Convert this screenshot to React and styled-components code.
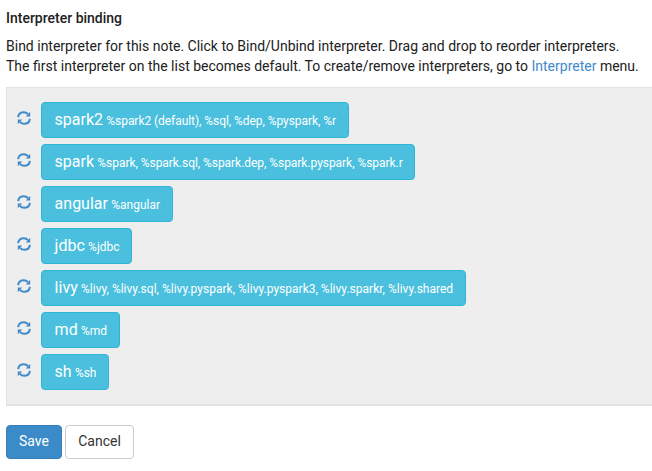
import React from "react";
import styled, { createGlobalStyle } from "styled-components";

const GlobalStyle = createGlobalStyle`
  * { box-sizing: border-box; }
  body { margin: 0; background: #fff; color: #212121; font: 14px/20px Roboto, sans-serif; overflow: hidden; }
`;
const Page = styled.main`
  padding: 8px 0 0 6px;
  height: 471px;
  overflow: hidden;
`;
const Title = styled.h5`
  margin: 0 0 8px;
  font-size: 14px;
  font-weight: 500;
  line-height: 20px;
`;
const Intro = styled.p`
  margin: 0;
  white-space: nowrap;
`;
const Link = styled.a`
  color: #428bca;
  text-decoration: none;
`;
const List = styled.div`
  display: flex;
  flex-direction: column;
  gap: 6px;
  height: 319px;
  margin-top: 11px;
  padding: 14px 0 0 10px;
  background: #eee;
  border: 1px solid #e2e2e2;
  border-right: 0;
  border-bottom: 2px solid #e2e2e2;
`;
const Row = styled.div`
  display: flex;
  align-items: flex-start;
  height: 36px;
`;
const RefreshSlot = styled.span`
  width: 24px;
  padding-top: 9px;
  color: #428bca;
  line-height: 0;
`;
const Tag = styled.button`
  width: ${(p) => p.$width}px;
  height: 36px;
  padding: 0 0 0 12.6px;
  border: 1px solid #2fb6d6;
  border-radius: 4px;
  background: #4abfde;
  color: #fff;
  font: 16px/34px Roboto, sans-serif;
  text-align: left;
  white-space: nowrap;
`;
const Names = styled.small`
  margin-left: -0.7px;
  font-size: 12px;
  letter-spacing: ${(p) => p.$spacing}px;
`;
const Actions = styled.div`
  display: flex;
  gap: 3px;
  margin-top: 19px;
`;
const Button = styled.button`
  width: ${(p) => (p.$primary ? 56 : 69)}px;
  height: 34px;
  padding: 0 0 2px;
  border: 1px solid ${(p) => (p.$primary ? "#357ebd" : "#ccc")};
  border-radius: 4px;
  background: ${(p) => (p.$primary ? "#3b8bc8" : "#fff")};
  color: ${(p) => (p.$primary ? "#fff" : "#333")};
  font: 14px/20px Roboto, sans-serif;
`;
const interpreters = [
  { name: "spark2", aliases: "%spark2 (default), %sql, %dep, %pyspark, %r", width: 308, spacing: -0.055 },
  { name: "spark", aliases: "%spark, %spark.sql, %spark.dep, %spark.pyspark, %spark.r", width: 374, spacing: -0.045 },
  { name: "angular", aliases: "%angular", width: 132, spacing: 0 },
  { name: "jdbc", aliases: "%jdbc", width: 91, spacing: 0 },
  { name: "livy", aliases: "%livy, %livy.sql, %livy.pyspark, %livy.pyspark3, %livy.sparkr, %livy.shared", width: 425, spacing: 0.01 },
  { name: "md", aliases: "%md", width: 79, spacing: 0 },
  { name: "sh", aliases: "%sh", width: 68, spacing: -0.1 },
];

function RefreshIcon() {
  return (
    <svg width="14" height="14" viewBox="0 0 14 14" aria-hidden="true">
      <path d="M1.1 6.2C1.5 3.1 3.9 1.2 6.8 1.2c1.8 0 3.2.7 4.2 1.9M12.9 7.8c-.4 3.1-2.8 5-5.7 5-1.8 0-3.2-.7-4.2-1.9" fill="none" stroke="currentColor" strokeWidth="2" />
      <path d="M13.2.8v4.6H8.8zM.8 13.2V8.6h4.4z" fill="currentColor" />
    </svg>
  );
}

export default function App() {
  return (
    <Page>
      <GlobalStyle />
      <Title>Interpreter binding</Title>
      <Intro>
        Bind interpreter for this note. Click to Bind/Unbind interpreter. Drag and drop to reorder interpreters.<br />
        The first interpreter on the list becomes default. To create/remove interpreters, go to <Link>Interpreter</Link> menu.
      </Intro>
      <List>
        {interpreters.map(({ name, aliases, width, spacing }) => (
          <Row key={name}>
            <RefreshSlot><RefreshIcon /></RefreshSlot>
            <Tag $width={width}>{name} <Names $spacing={spacing}>{aliases}</Names></Tag>
          </Row>
        ))}
      </List>
      <Actions>
        <Button $primary>Save</Button>
        <Button>Cancel</Button>
      </Actions>
    </Page>
  );
}
